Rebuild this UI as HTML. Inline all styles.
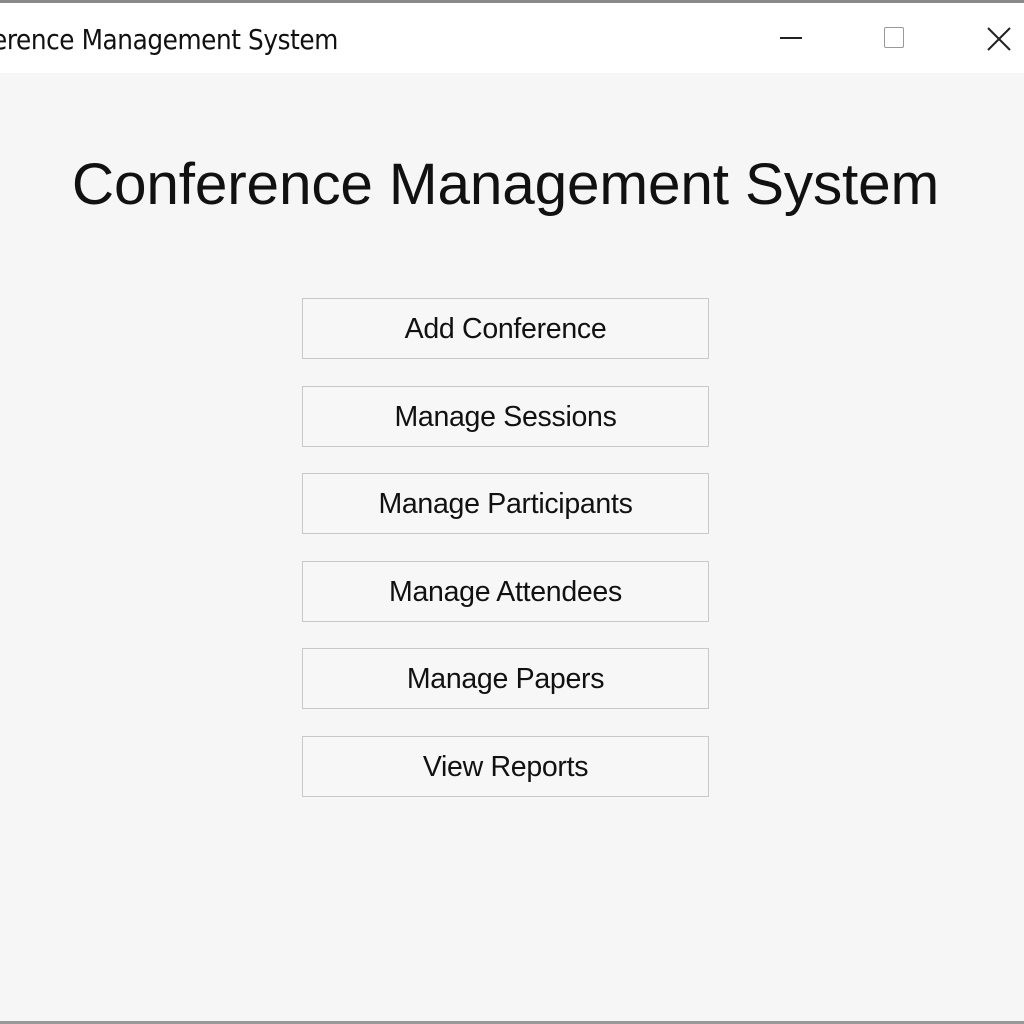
<!DOCTYPE html>
<html><head><style>
body{margin:0;width:1024px;height:1024px;overflow:hidden;background:#f6f6f6;font-family:"Liberation Sans",Arial,sans-serif;position:relative}
.top{position:absolute;left:0;top:0;width:1024px;height:3px;background:#8a8a8a}
.bar{position:absolute;left:0;top:3px;width:1024px;height:70px;background:#fff}
.cap{position:absolute;left:-8px;top:21px;font-family:"DejaVu Sans Condensed","Liberation Sans",sans-serif;font-size:27.5px;color:#111;letter-spacing:-0.4px}
h1{position:absolute;left:0;width:1011px;top:151px;margin:0;text-align:center;font-weight:normal;font-size:58.5px;color:#111;letter-spacing:-0.15px}
.b{position:absolute;left:302px;width:405px;height:59px;border:1px solid #c9c9c9;background:#f7f7f7;text-align:center;line-height:61px;font-size:28.5px;color:#111;letter-spacing:-0.3px}
.bot{position:absolute;left:0;top:1021px;width:1024px;height:3px;background:#999}
</style></head><body>
<div class="top"></div>
<div class="bar">
<div class="cap">erence Management System</div>
<div style="position:absolute;left:780px;top:34px;width:22px;height:2px;background:#222"></div>
<div style="position:absolute;left:884px;top:24px;width:18px;height:19px;border:1.5px solid #999;border-radius:2px"></div>
<svg style="position:absolute;left:986px;top:23px" width="26" height="26"><path d="M2 2L24 24M24 2L2 24" stroke="#222" stroke-width="2"/></svg>
</div>
<h1>Conference Management System</h1>
<div class="b" style="top:298px">Add Conference</div>
<div class="b" style="top:386px">Manage Sessions</div>
<div class="b" style="top:473px">Manage Participants</div>
<div class="b" style="top:561px">Manage Attendees</div>
<div class="b" style="top:648px">Manage Papers</div>
<div class="b" style="top:736px">View Reports</div>
<div class="bot"></div>
</body></html>
